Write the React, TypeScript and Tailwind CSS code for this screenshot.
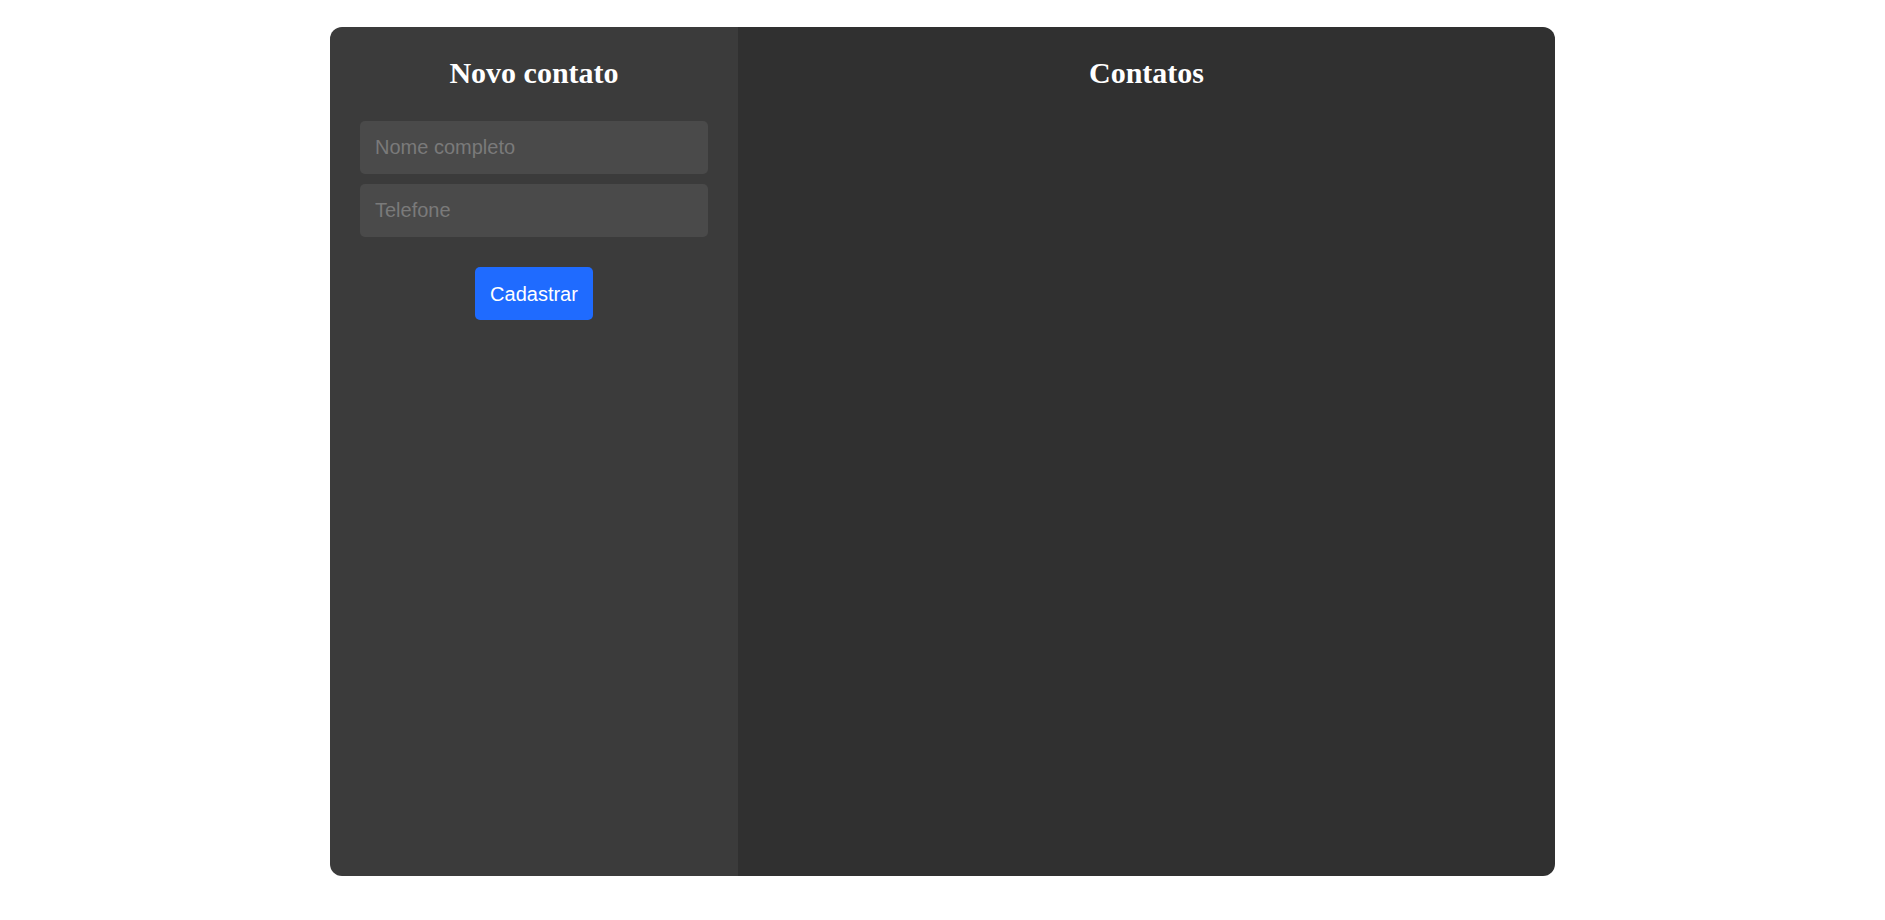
export default function App() {
    return (
        <div className="min-h-screen bg-white flex justify-center pt-[27px]" style={{ fontFamily: '"Liberation Sans", Arial, sans-serif' }}>
            <div className="w-[1225px] h-[849px] rounded-[12px] overflow-hidden grid grid-cols-[408px_1fr]">
                {/* novo contato */}
                <section className="bg-[#3b3b3b] px-[30px] pt-[28px] flex flex-col">
                    <h1 className="text-center text-white text-[30px] leading-[35px] font-bold" style={{ fontFamily: '"Liberation Serif", "Times New Roman", serif' }}>
                        Novo contato
                    </h1>
                    <form className="mt-[31px] flex flex-col gap-[10px]" onSubmit={(e) => e.preventDefault()}>
                        <input
                            type="text"
                            placeholder="Nome completo"
                            className="h-[53px] w-full rounded-[5px] bg-[#4a4a4a] px-[15px] text-[20px] text-white placeholder:text-[#7a7a7a] outline-none"
                        />
                        <input
                            type="text"
                            placeholder="Telefone"
                            className="h-[53px] w-full rounded-[5px] bg-[#4a4a4a] px-[15px] text-[20px] text-white placeholder:text-[#7a7a7a] outline-none"
                        />
                        <div className="flex justify-center mt-[20px]">
                            <button type="submit" className="h-[53px] px-[15px] rounded-[5px] bg-[#1f6bff] text-white text-[20px]">
                                Cadastrar
                            </button>
                        </div>
                    </form>
                </section>

                {/* lista */}
                <section className="bg-[#303030] pt-[28px]">
                    <h1 className="text-center text-white text-[30px] leading-[35px] font-bold" style={{ fontFamily: '"Liberation Serif", "Times New Roman", serif' }}>
                        Contatos
                    </h1>
                </section>
            </div>
        </div>
    );
}
